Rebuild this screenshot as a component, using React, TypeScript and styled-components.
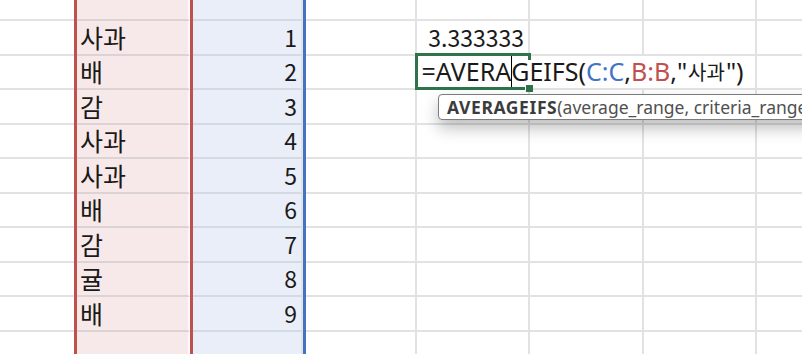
import React from "react";
import styled, { createGlobalStyle, css } from "styled-components";

const GlobalStyle = createGlobalStyle`
  html, body {
    margin: 0;
    padding: 0;
    background: #ffffff;
    overflow: hidden;
  }
  body {
    font-family: "Noto Sans CJK KR", "Noto Sans", sans-serif;
  }
`;

type Tone = "plain" | "red" | "blue";

const RANGE = {
  red: { fill: "#f7e9e9", line: "#dcd4d4", edge: "#c0504d" },
  blue: { fill: "#e9eef8", line: "#d5d9e1", edge: "#4472c4" },
};

const Viewport = styled.div`
  position: relative;
  width: 802px;
  height: 354px;
  overflow: hidden;
`;

const Sheet = styled.div`
  display: flex;
  margin-left: -37.5px;
  margin-top: -13.5px;
`;

const Column = styled.div<{ $tone: Tone }>`
  position: relative;
  flex: 0 0 113.5px;
  display: flex;
  flex-direction: column;
  background: ${(p) => (p.$tone === "plain" ? "#ffffff" : RANGE[p.$tone].fill)};

  ${(p) =>
    p.$tone !== "plain" &&
    css`
      &::after {
        content: "";
        position: absolute;
        top: 0;
        bottom: 0;
        left: ${p.$tone === "red" ? "-2.5px" : "0"};
        right: ${p.$tone === "red" ? "-3.5px" : "-3px"};
        border-left: 3px solid ${RANGE[p.$tone].edge};
        border-right: 3px solid ${RANGE[p.$tone].edge};
        z-index: ${p.$tone === "red" ? 6 : 5};
        pointer-events: none;
      }
    `}
`;

const Cell = styled.div<{ $tone: Tone; $align?: "left" | "right" }>`
  position: relative;
  box-sizing: border-box;
  height: 34.5px;
  display: flex;
  align-items: center;
  justify-content: ${(p) => (p.$align === "right" ? "flex-end" : "flex-start")};
  padding: ${(p) => (p.$align === "right" ? "0 4px 0 0" : "0 0 0 4px")};
  border-bottom: 2px solid
    ${(p) => (p.$tone === "plain" ? "#e2e2e2" : RANGE[p.$tone].line)};
  border-right: 2px solid ${(p) => (p.$tone === "red" ? "#fbfbfb" : "#e2e2e2")};
  font-size: ${(p) => (p.$align === "right" ? "23px" : "25px")};
  line-height: 1;
  color: #1a1a1a;
  white-space: nowrap;
`;

const Editor = styled.div`
  position: absolute;
  left: 0;
  top: 0;
  bottom: 0;
  z-index: 3;
  display: flex;
  align-items: center;
  padding: 0 10px 0 5px;
  background: #ffffff;
  font-family: "Noto Sans", "Noto Sans CJK KR", sans-serif;
  font-size: 25px;
  color: #1a1a1a;
  white-space: nowrap;
`;

const Ref = styled.span<{ $tone: "red" | "blue" }>`
  color: ${(p) => (p.$tone === "red" ? "#c0504d" : "#4472c4")};
`;

const Hangul = styled.span`
  font-family: "Noto Sans CJK KR", sans-serif;
  font-size: 20px;
  margin: 0 1px;
`;

const Caret = styled.span`
  display: inline-block;
  width: 1px;
  height: 35px;
  background: #000000;
  margin: 0 -0.5px;
`;

const Selection = styled.div`
  position: absolute;
  left: -2px;
  top: -2.5px;
  right: -3px;
  bottom: -1.5px;
  z-index: 4;
  border: 3px solid #2e7349;
  border-right: none;
  pointer-events: none;

  &::after {
    content: "";
    position: absolute;
    right: 0;
    top: -3px;
    width: 3px;
    height: 7px;
    background: #2e7349;
  }

  &::before {
    content: "";
    position: absolute;
    right: -2px;
    bottom: -5px;
    width: 7px;
    height: 7px;
    background: #2e7349;
    border-left: 1px solid #ffffff;
  }
`;

const Tooltip = styled.div`
  position: absolute;
  left: 438px;
  top: 94px;
  right: -20px;
  height: 26px;
  box-sizing: border-box;
  z-index: 10;
  display: flex;
  align-items: center;
  padding-left: 8px;
  background: #ffffff;
  border: 1px solid #7c7c7c;
  border-radius: 4px;
  box-shadow: 0 8px 16px rgba(0, 0, 0, 0.26);
  font-family: "Noto Sans", sans-serif;
  font-size: 17.5px;
  color: #505050;
  white-space: nowrap;
  overflow: hidden;
`;

const FnName = styled.b`
  font-weight: 700;
  color: #3c3c3c;
  letter-spacing: 0.6px;
`;

const ROWS = 11;
const fruits = ["", "사과", "배", "감", "사과", "사과", "배", "감", "귤", "배", ""];
const counts = ["", "1", "2", "3", "4", "5", "6", "7", "8", "9", ""];

function FormulaEditor() {
  return (
    <Editor>
      =AVERA
      <Caret />
      GEIFS(
      <Ref $tone="blue">C:C</Ref>,<Ref $tone="red">B:B</Ref>,"<Hangul>사과</Hangul>")
    </Editor>
  );
}

function PlainColumn({ render }: { render?: (row: number) => React.ReactNode }) {
  return (
    <Column $tone="plain">
      {Array.from({ length: ROWS }, (_, r) => (
        <Cell key={r} $tone="plain" $align="right">
          {render ? render(r) : null}
        </Cell>
      ))}
    </Column>
  );
}

export default function App() {
  return (
    <>
      <GlobalStyle />
      <Viewport>
        <Sheet>
          <PlainColumn />
          <Column $tone="red">
            {fruits.map((f, r) => (
              <Cell key={r} $tone="red">
                {f}
              </Cell>
            ))}
          </Column>
          <Column $tone="blue">
            {counts.map((c, r) => (
              <Cell key={r} $tone="blue" $align="right">
                {c}
              </Cell>
            ))}
          </Column>
          <PlainColumn />
          <PlainColumn
            render={(r) =>
              r === 1 ? (
                "3.333333"
              ) : r === 2 ? (
                <>
                  <FormulaEditor />
                  <Selection />
                </>
              ) : null
            }
          />
          <PlainColumn />
          <PlainColumn />
          <PlainColumn />
        </Sheet>
        <Tooltip>
          <FnName>AVERAGEIFS</FnName>
          (average_range, criteria_range1, criteria1, ...)
        </Tooltip>
      </Viewport>
    </>
  );
}
